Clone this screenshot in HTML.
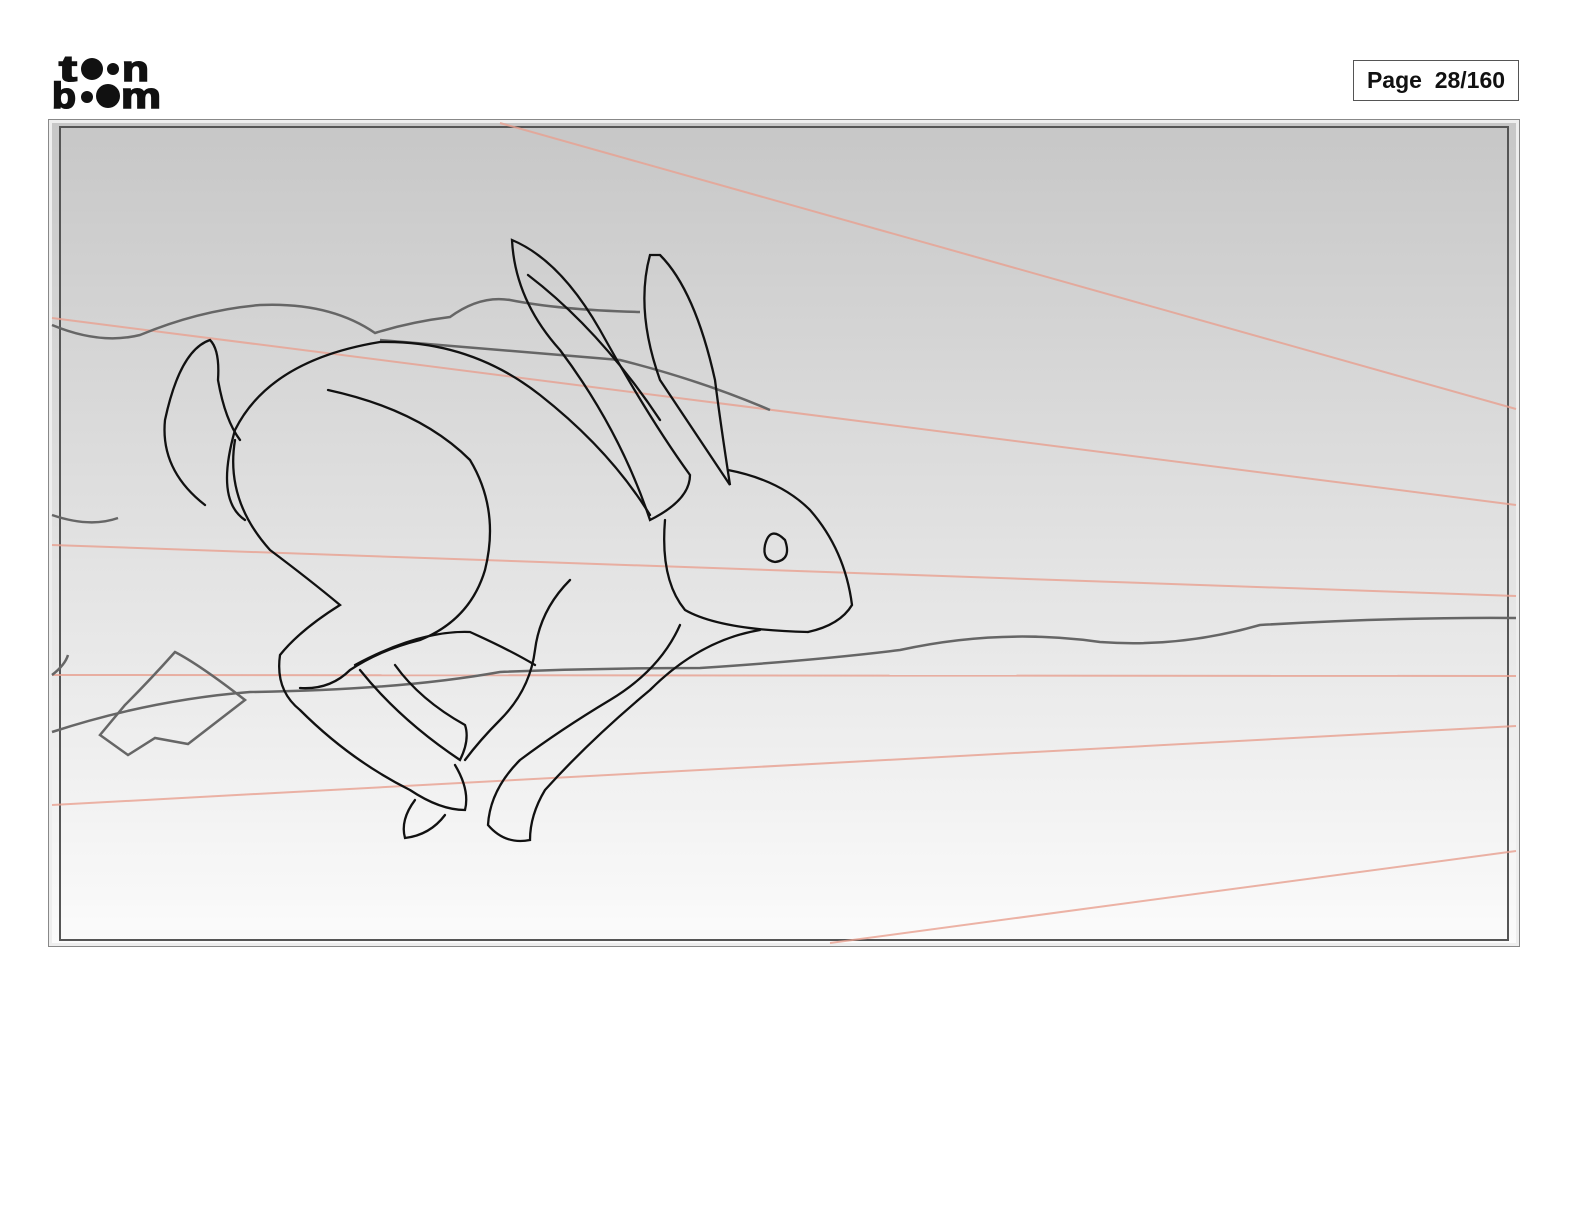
<!DOCTYPE html>
<html><head><meta charset="utf-8"><style>
body{margin:0;width:1584px;height:1224px;background:#fff;position:relative;overflow:hidden;font-family:"Liberation Sans",sans-serif}
.pg{position:absolute;left:1353px;top:60px;width:166px;height:41px;border:1px solid #555;box-sizing:border-box;font:bold 23px/39px "Liberation Sans",sans-serif;text-align:center;color:#111}
</style></head><body>
<svg style="position:absolute;left:0;top:0" width="1584" height="1224">
<g fill="#111" stroke="#111" stroke-width="1.6" font-family="Liberation Sans" font-weight="bold">
<text x="59" y="81" font-size="36" textLength="18" lengthAdjust="spacingAndGlyphs">t</text>
<circle cx="92" cy="69" r="11" stroke="none"/><circle cx="113" cy="69" r="6" stroke="none"/>
<text x="122" y="81" font-size="36" textLength="27" lengthAdjust="spacingAndGlyphs">n</text>
<text x="52" y="108" font-size="36" textLength="24" lengthAdjust="spacingAndGlyphs">b</text>
<circle cx="87" cy="97" r="6" stroke="none"/><circle cx="108" cy="96" r="12" stroke="none"/>
<text x="121" y="108" font-size="36" textLength="40" lengthAdjust="spacingAndGlyphs">m</text>
</g>
<defs><linearGradient id="g" x1="0" y1="0" x2="0" y2="1"><stop offset="0" stop-color="#c7c7c7"/><stop offset="1" stop-color="#fbfbfb"/></linearGradient></defs>
<rect x="48.5" y="119.5" width="1471" height="827" fill="#eee" stroke="#888"/>
<rect x="52" y="123" width="1464" height="820" fill="url(#g)"/>
<rect x="60" y="127" width="1448" height="813" fill="none" stroke="#555" stroke-width="2"/>
<g stroke="#e8a090" stroke-width="2" fill="none" opacity=".8">
<path d="M500 123 L1516 409"/><path d="M52 318 L1516 505"/><path d="M52 545 L1516 596"/><path d="M52 675 L1516 676"/><path d="M52 805 L1516 726"/><path d="M830 943 L1516 851"/>
</g>
<g stroke="#666" stroke-width="2.5" fill="none">
<path d="M52 325 Q100 345 140 335 Q200 310 260 305 Q330 302 375 333 Q410 322 450 317 Q480 295 510 300 Q560 310 640 312"/>
<path d="M380 340 Q500 350 620 360 Q700 380 770 410"/>
<path d="M52 515 Q90 528 118 518"/>
<path d="M52 732 Q150 700 250 692 Q400 690 500 672 Q600 668 700 668 Q820 660 900 650 Q1000 628 1100 642 Q1180 648 1260 625 Q1400 617 1516 618"/>
<path d="M100 735 L128 755 L155 738 L188 744 L245 700 Q200 665 175 652 Q150 680 125 705 Z"/>
<path d="M52 675 Q65 665 68 655"/>
</g>
<g stroke="#111" stroke-width="2.3" fill="none" stroke-linecap="round">
<path d="M205 505 Q160 470 165 420 Q180 350 210 340 Q220 350 218 380 Q225 420 240 440"/>
<path d="M245 520 Q215 500 235 430 Q270 360 380 342 Q470 340 540 395 Q610 450 650 515"/>
<path d="M235 440 Q225 500 270 550 Q310 580 340 605 Q300 630 280 655 Q275 690 300 710 Q350 760 410 790 Q440 810 465 810 Q470 790 455 765"/>
<path d="M328 390 Q420 410 470 460 Q500 510 485 570 Q470 620 420 640 Q380 650 350 670 Q330 690 300 688"/>
<path d="M512 240 Q515 300 560 350 Q620 430 650 520 Q690 500 690 475 Q650 420 600 330 Q560 260 512 240Z"/>
<path d="M528 275 Q600 330 660 420"/>
<path d="M650 255 Q635 310 660 380 Q700 440 730 485 Q720 420 715 380 Q695 290 660 255Z"/>
<path d="M728 470 Q780 480 810 510 Q845 550 852 605 Q840 625 808 632"/>
<path d="M765 545 Q770 525 785 540 Q792 560 775 562 Q762 560 765 545Z"/>
<path d="M665 520 Q660 580 685 610 Q720 630 808 632"/>
<path d="M680 625 Q660 670 610 700 Q560 730 520 760 Q490 790 488 825 Q505 845 530 840 Q530 815 545 790 Q590 740 650 690 Q700 640 760 630"/>
<path d="M570 580 Q540 610 535 650 Q530 690 500 720 Q480 740 465 760"/>
<path d="M360 670 Q400 720 460 760 Q470 740 465 725 Q420 700 395 665"/>
<path d="M355 665 Q420 630 470 632 Q510 650 535 665"/>
<path d="M415 800 Q400 820 405 838 Q430 835 445 815"/>
</g>
</svg>
<div class="pg">Page&nbsp; 28/160</div>
</body></html>
